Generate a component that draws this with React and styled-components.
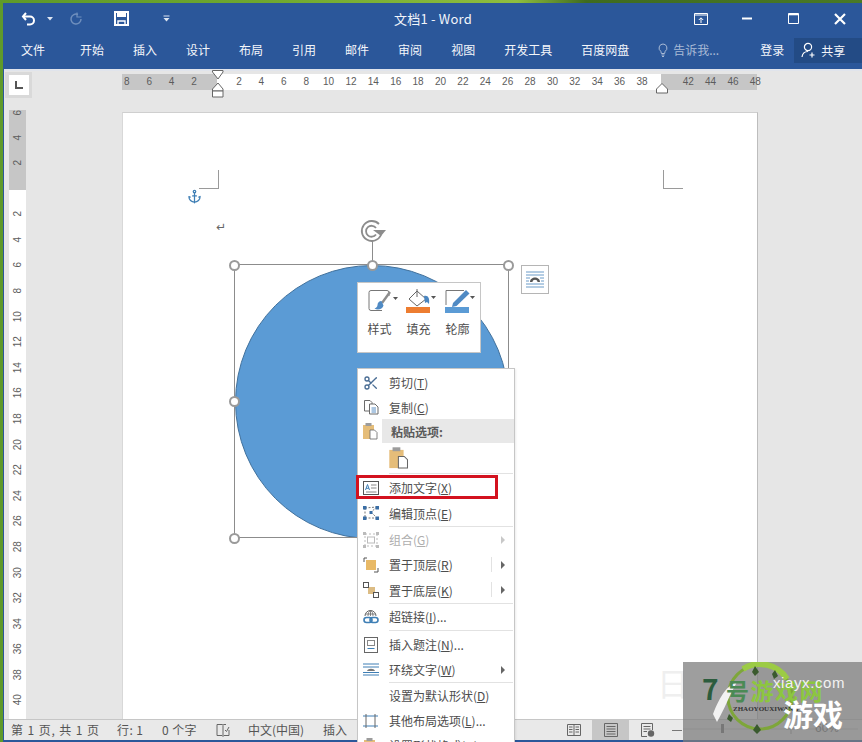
import React from 'react';
import styled, { createGlobalStyle } from 'styled-components';
import { Scissors, Anchor } from 'lucide-react';

const Global = createGlobalStyle`
  html, body { margin: 0; padding: 0; }
  body { font-family: "Noto Sans CJK SC", "Liberation Sans", sans-serif; }
  * { box-sizing: border-box; }
`;

const Stage = styled.div`
  position: relative; width: 862px; height: 742px; overflow: hidden; padding: 3px 0 0 3px;
  background: linear-gradient(90deg, #5f9a2a 0%, #6fa82e 30%, #8fbe3e 60%, #3f6b1f 68%, #4a7a26 100%);
`;
const Window = styled.div`
  width: 859px; height: 739px; display: flex; flex-direction: column;
  border-left: 1px solid #2b579a; border-bottom: 2px solid #2b579a; background: #e6e6e6;
`;
const Ribbon = styled.header`background: #2b579a; color: #fff; height: 66px; flex: none;`;
const TitleRow = styled.div`height: 31px; display: grid; grid-template-columns: 1fr auto 1fr; align-items: center;`;
const Qat = styled.div`display: flex; align-items: center; padding-left: 17px;`;
const QatSlot = styled.span`display: flex; align-items: center; justify-content: center; width: ${p => p.$w}px; height: 20px; margin-left: ${p => p.$ml || 0}px;`;
const Title = styled.div`font-size: 13px; letter-spacing: .2px; color: #f2f5fa; margin-top: -1px; font-family: "Noto Sans CJK SC", sans-serif;`;
const WinBtns = styled.div`display: flex; justify-content: flex-end; margin-right: -1px;`;
const WinBtn = styled.span`display: flex; width: 46.4px; justify-content: center; align-items: center; height: 24px;`;
const TabRow = styled.nav`height: 35px; display: flex; align-items: center; padding-left: 17px; font-size: 12px; position: relative;`;
const Tab = styled.span`flex: none; margin-right: ${p => p.$gap ?? 29}px; color: #f4f6fa; white-space: nowrap; line-height: 18px; margin-top: -4px;`;
const TellMe = styled.span`flex: none; display: flex; align-items: center; gap: 5px; color: #a9bbd6; width: 102px; margin-top: -4px;`;
const Share = styled.span`
  flex: none; margin-left: 10px; width: 68px; height: 25px; margin-top: -3px; background: #234b85; display: flex; align-items: center;
  gap: 4px; padding-left: 7px; color: #f4f6fa;
`;

const RulerRow = styled.div`height: 29px; flex: none; display: flex; align-items: flex-start; padding-top: 1px; background: #e6e6e6; border-top: 2px solid #e0e4ec;`;
const Corner = styled.div`
  width: 27px; height: 26px; margin-left: 1px; background: #d9d9d9; display: flex; align-items: center; justify-content: center;
`;
const CornerInner = styled.div`width: 20px; height: 20px; background: #fff; display: flex; align-items: center; justify-content: center;`;
const HRuler = styled.div`
  position: relative; margin-left: 90px; margin-top: 2px; height: 16px; width: 635px; display: flex;
  font: 10px/16px "Liberation Sans", sans-serif; color: #5c5c5c;
`;
const HSeg = styled.div`
  width: ${p => p.$w}px; flex: none; display: flex; background: ${p => p.$grey ? '#c6c6c6' : '#fff'};
  justify-content: ${p => p.$end ? 'flex-end' : 'flex-start'};
  padding: 0 ${p => p.$pr || 0}px 0 ${p => p.$pl || 0}px;
`;
const HTick = styled.span`width: 22.4px; flex: none; text-align: center;`;
const MarkerLeft = styled.svg`position: absolute; left: 90px; top: -4px;`;
const MarkerRight = styled.svg`position: absolute; left: 534px; top: 9px;`;

const Main = styled.div`flex: 1; display: flex; min-height: 0; padding-left: 5px;`;
const VRuler = styled.div`
  width: 17px; flex: none; margin-top: 12px; display: flex; flex-direction: column; overflow: hidden;
  font: 10px/17px "Liberation Sans", sans-serif; color: #5c5c5c;
`;
const VSeg = styled.div`
  display: flex; flex-direction: column; background: ${p => p.$grey ? '#c6c6c6' : '#fff'};
  height: ${p => p.$h ? p.$h + 'px' : 'auto'}; flex: ${p => p.$h ? 'none' : 1};
  justify-content: ${p => p.$end ? 'flex-end' : 'flex-start'};
  padding: ${p => p.$pt || 0}px 0 ${p => p.$pb || 0}px;
`;
const VTick = styled.span`height: ${p => p.$h}px; flex: none; display: flex; align-items: center; justify-content: center; transform: rotate(-90deg);`;
const Page = styled.div`
  position: relative; width: 636px; margin: 14px 0 0 96px; background: #fff;
  border-top: 1px solid #cfcfcf; border-right: 1px solid #bdbdbd; border-left: 1px solid #d8d8d8;
`;
const Crop = styled.div`
  position: absolute; left: ${p => p.$x}px; top: 57px; width: 20px; height: 19px; border-bottom: 1px solid #9a9a9a;
  ${p => p.$side}: 1px solid #9a9a9a;
`;
const AnchorMark = styled.span`position: absolute; left: 64px; top: 76px; color: #3f7fb5; display: flex;`;
const ReturnMark = styled.span`position: absolute; left: 93px; top: 107px; font: 12px/14px "DejaVu Sans", sans-serif; color: #666;`;
const Circle = styled.div`
  position: absolute; left: 112px; top: 152px; width: 274px; height: 274px; border-radius: 50%; background: #5b9bd5; border: 1px solid #41719c;
`;
const SelBox = styled.div`position: absolute; left: 111px; top: 151px; width: 275px; height: 274px; border: 1px solid #8c8c8c;`;
const Handle = styled.span`
  position: absolute; width: 11px; height: 11px; border-radius: 50%; background: #fff; border: 2px solid #9a9a9a;
  left: ${p => p.$x - 6.5}px; top: ${p => p.$y - 5.5}px;
`;
const RotateStem = styled.span`position: absolute; left: 249px; top: 128px; width: 1px; height: 23px; background: #8c8c8c;`;
const RotateIcon = styled.svg`position: absolute; left: 237px; top: 106px;`;
const LayoutBtn = styled.span`
  position: absolute; left: 398px; top: 152px; width: 28px; height: 29px; border: 1px solid #b5b5b5; background: #fff;
  display: flex; align-items: center; justify-content: center;
`;
const Ghost = styled.span`position: absolute; left: 534px; top: 546px; font-size: 32px; color: #efefef;`;

const MiniBar = styled.div`
  position: absolute; left: 234px; top: 169px; width: 124px; height: 71px; background: #fff; border: 1px solid #c6c6c6;
  display: flex; padding: 5px 0 0 2px; z-index: 4;
`;
const MiniBtn = styled.div`
  width: 39px; display: flex; flex-direction: column; align-items: center; font-size: 12px; color: #4d4d4d; gap: 6px; line-height: 18px;
`;
const MiniGlyph = styled.span`display: flex; height: 26px; width: 39px; padding-left: ${p => p.$pl}px; flex: none;`;

const Menu = styled.div`
  position: absolute; left: 234px; top: 255px; width: 158px; background: #fff; border: 1px solid #c6c6c6; padding-top: 1px;
  font-size: 12px; color: #4d4d4d; z-index: 5; box-shadow: 1px 1px 2px rgba(0,0,0,.08);
`;
const Item = styled.div`
  height: ${p => p.$h || 25}px; display: flex; align-items: center; position: relative; white-space: nowrap;
  color: ${p => p.$off ? '#aeaeae' : '#4d4d4d'};
`;
const ItemIcon = styled.span`width: ${p => p.$w || 31}px; flex: none; display: flex; align-items: center; justify-content: center; padding-right: ${p => p.$pr ?? 6}px;`;
const Sep = styled.div`height: 1px; margin: ${p => p.$m || 0}px 1px ${p => p.$m || 0}px 31px; background: #e2e2e2;`;
const Arrow = styled.span`
  position: absolute; right: 9px; top: 50%; margin-top: -4px; width: 0; height: 0;
  border-left: 4px solid ${p => p.$off ? '#c8c8c8' : '#666'}; border-top: 4px solid transparent; border-bottom: 4px solid transparent;
`;
const SubDivider = styled.span`position: absolute; right: 22px; top: 5px; height: 15px; width: 1px; background: #e2e2e2;`;
const PasteHead = styled.div`
  height: 24px; padding-left: 9px; background: #e8e8e8; display: flex; align-items: center; font-weight: 700; color: #5a5a5a; flex: 1;
`;
const PasteRow = styled.div`height: 29px; padding-left: 30px; display: flex; align-items: center;`;
const Highlight = styled.div`
  position: absolute; left: 233px; top: 362px; width: 142px; height: 24px; border: 3px solid #d3121f; z-index: 6; pointer-events: none;
`;

const Status = styled.footer`
  height: 21px; flex: none; background: #e9e9e9; border-top: 1px solid #c6c6c6; display: flex; align-items: center;
  font-size: 12px; color: #555; padding-left: 7px; position: relative; line-height: 20px;
`;
const StatusText = styled.span`
  width: ${p => p.$w}px; flex: none; white-space: nowrap; display: flex; align-items: center; letter-spacing: ${p => p.$ls || 0}px;
`;
const Views = styled.div`margin-left: auto; display: flex; align-items: center; height: 100%; margin-right: 179px;`;
const View = styled.span`
  width: 37px; height: 100%; display: flex; align-items: center; justify-content: center;
  background: ${p => p.$on ? '#c6c6c6' : 'transparent'};
`;
const ZoomOut = styled.span`width: 17px; height: 100%; display: flex; align-items: center; justify-content: flex-end; padding-right: 1px;`;
const ZoomDash = styled.span`width: 10px; height: 1px; background: #777;`;

const Mark = styled.div`
  position: absolute; left: 683px; top: 662px; width: 179px; height: 80px; background: rgba(125,125,125,.75); z-index: 8; overflow: hidden;
`;
const MarkArt = styled.svg`position: absolute; left: 0; top: 0;`;
const MarkTitle = styled.div`
  position: absolute; left: 19px; top: 12px; font: 700 23px/28px "Noto Sans CJK SC", sans-serif; color: #8cc63f; white-space: nowrap; letter-spacing: 1.5px;
`;
const MarkDark = styled.span`color: ${p => p.$c || '#1f4f32'}; ${p => p.$big ? 'font-size: 28px; margin-right: 6px;' : ''}`;
const MarkUrl = styled.div`position: absolute; left: 90px; top: 12px; font: 15px/18px "Liberation Sans", sans-serif; color: #f2f2f2; letter-spacing: .6px;`;
const MarkPin = styled.div`position: absolute; left: 50px; top: 42px; font: 700 7px/10px "Liberation Serif", serif; color: #333; white-space: nowrap;`;
const MarkBig = styled.div`position: absolute; left: 100px; top: 32px; font: 700 30px/38px "Noto Sans CJK SC", sans-serif; color: #fff; white-space: nowrap;`;
const MarkPct = styled.div`position: absolute; left: 132px; top: 58px; font: 12px/16px "Liberation Sans", sans-serif; color: #777;`;

const Ic = ({ w = 16, h = 16, children, ...r }) => (
  <svg width={w} height={h} viewBox={`0 0 ${w} ${h}`} fill="none" {...r}>{children}</svg>
);

const Undo = () => <Ic w={16} h={16}><path d="M5 2 L2 5.5 L5 9" stroke="#fff" strokeWidth="2"/><path d="M2.5 5.5H9a4 4 0 0 1 0 8H6" stroke="#fff" strokeWidth="2"/></Ic>;
const Caret = () => <Ic w={6} h={4}><path d="M0 0H6L3 3.5Z" fill="#dfe6f2"/></Ic>;
const Redo = () => <Ic w={14} h={14}><path d="M9 2.5A5 5 0 1 0 12 7" stroke="#6f8fbd" strokeWidth="1.5"/><path d="M8 0.5V5H12.5" stroke="#6f8fbd" strokeWidth="1.2"/></Ic>;
const Save = () => <Ic w={15} h={15}><path d="M1 1H14V14H1Z" stroke="#fff" strokeWidth="2"/><path d="M3 2H12V6H3Z" fill="#fff"/><path d="M4 10H11V14H4Z" stroke="#fff" strokeWidth="1.4"/></Ic>;
const Custom = () => <Ic w={7} h={7}><path d="M0.5 1H6.5" stroke="#dfe6f2"/><path d="M0.5 3H6.5L3.5 6.5Z" fill="#dfe6f2"/></Ic>;
const RibbonDisp = () => <Ic w={14} h={12}><path d="M.5 .5H13.5V11.5H.5Z" stroke="#fff"/><path d="M.5 2H13.5" stroke="#fff"/><path d="M7 10V5M4.8 7L7 4.8 9.2 7" stroke="#fff"/></Ic>;
const Minim = () => <Ic w={10} h={3}><path d="M0 1.5H10" stroke="#fff" strokeWidth="2"/></Ic>;
const Maxim = () => <Ic w={11} h={11}><path d="M.5 .5H10.5V10.5H.5Z" stroke="#fff"/><path d="M.5 1.5H10.5" stroke="#fff" strokeWidth="1.6"/></Ic>;
const Close = () => <Ic w={12} h={12}><path d="M1 1L11 11M11 1L1 11" stroke="#fff" strokeWidth="2.2"/></Ic>;
const Bulb = () => <Ic w={10} h={14}><path d="M5 1a4 4 0 0 0-2.2 7.3L3.4 10.5H6.6L7.2 8.3A4 4 0 0 0 5 1Z" stroke="#a9bbd6"/><path d="M3.5 12H6.5M4 13.5H6" stroke="#a9bbd6"/></Ic>;
const Person = () => <Ic w={16} h={16}><circle cx="7" cy="5" r="3.6" stroke="#fff" strokeWidth="1.2"/><path d="M1 15C1.5 11 4 9.5 7 9.5M11 10.5V15.5M8.5 13H13.5" stroke="#fff" strokeWidth="1.2"/></Ic>;

const StyleIcon = () => (
  <Ic w={30} h={26}><path d="M14 22.5H3a2 2 0 0 1-2-2V4.5a2 2 0 0 1 2-2H19a2 2 0 0 1 2 2V8" stroke="#777"/><path d="M22 4L14 15" stroke="#8d8d8d" strokeWidth="2.4"/><path d="M13.5 13c-2.5 0-4 2-4 4 0 2-1.5 3-3 3.5 3 2 8 1 9-3z" fill="#4f8ac4"/><path d="M25 9H30L27.5 12Z" fill="#555"/></Ic>
);
const FillIcon = () => (
  <Ic w={30} h={25}><path d="M11 3L20 11L11 18L3 11Z" stroke="#666" fill="#fff"/><path d="M11 1V9" stroke="#666"/><path d="M18 8c4-1 6 2 5 8l-2-2-2 1z" fill="#4a86c0"/><rect x="0" y="19" width="24" height="6" fill="#ed7d31"/><path d="M25 8H30L27.5 11Z" fill="#555"/></Ic>
);
const OutlineIcon = () => (
  <Ic w={30} h={25}><path d="M1 17V2.5H19" stroke="#777"/><path d="M8 15L21 2L24.5 5.5L11.5 18L7 19Z" fill="#4f8ac4"/><rect x="0" y="19" width="24" height="6" fill="#5b9bd5"/><path d="M25 8H30L27.5 11Z" fill="#555"/></Ic>
);
const CopyI = () => <Ic w={16} h={16}><path d="M1.5 1.5H7L9 3.5V12H1.5Z" stroke="#6b6b6b" fill="#fff"/><path d="M6.5 5H12L15 8V15H6.5Z" stroke="#6b6b6b" fill="#fff"/><path d="M8.5 9H13M8.5 11H13M8.5 13H13" stroke="#5b8fc4"/></Ic>;
const PasteI = ({ s = 1 }) => (
  <svg width={16 * s} height={18 * s} viewBox="0 0 16 18" fill="none">
    <rect x="1" y="3" width="11" height="14" fill="#e5bd79"/><rect x="3.5" y="1" width="6" height="3" fill="#9c9c9c"/><path d="M8 8H12.5L15 10.5V17H8Z" fill="#fff" stroke="#666" strokeWidth=".8"/>
  </svg>
);
const TextBoxI = () => <Ic w={16} h={14}><rect x=".5" y=".5" width="15" height="13" stroke="#555" fill="#fff"/><path d="M2.5 9L4.5 3.5 6.5 9M3.2 7.3H5.8" stroke="#3f7fb5"/><path d="M8 4H13.5M8 7H13.5M3 11H13.5" stroke="#888"/></Ic>;
const PointsI = () => <Ic w={16} h={14}><path d="M2 2L14 1M14 1L8 6M8 6L14 12M2 12H14M2 2V12" stroke="#777" strokeDasharray="2 1.5"/><rect x="0" y="0" width="3.5" height="3.5" fill="#3a6ea5"/><rect x="12.5" y="0" width="3.5" height="3.5" fill="#3a6ea5"/><rect x="0" y="10.5" width="3.5" height="3.5" fill="#3a6ea5"/><rect x="12.5" y="10.5" width="3.5" height="3.5" fill="#3a6ea5"/><rect x="6.5" y="5" width="3" height="3" fill="#3a6ea5"/></Ic>;
const GroupI = () => <Ic w={16} h={16}><path d="M2 2H14V14H2Z" stroke="#bbb" strokeDasharray="2 2"/><rect x="0" y="0" width="3" height="3" fill="#bbb"/><rect x="13" y="0" width="3" height="3" fill="#bbb"/><rect x="0" y="13" width="3" height="3" fill="#bbb"/><rect x="13" y="13" width="3" height="3" fill="#bbb"/><rect x="4.5" y="5" width="7" height="6" stroke="#bbb"/></Ic>;
const FrontI = () => <Ic w={16} h={16}><path d="M4 1H1V5M15 11V15H11" stroke="#555"/><rect x="3" y="3" width="10" height="10" fill="#e8b966"/></Ic>;
const BackI = () => <Ic w={16} h={16}><rect x="5" y="5" width="7" height="7" fill="#dcbc84"/><rect x=".5" y=".5" width="5" height="5" stroke="#555" fill="#fff"/><rect x="10.5" y="10.5" width="5" height="5" stroke="#555" fill="#fff"/></Ic>;
const LinkI = () => <Ic w={16} h={16}><path d="M2 7a5.5 5.5 0 0 1 11 0" stroke="#666"/><path d="M7.5 1.5V7M5 7C5 4 6 2 7.5 1.5 9 2 10 4 10 7M2.5 5H12.5" stroke="#666" strokeWidth=".8"/><rect x="1" y="8.5" width="8" height="5" rx="2.5" stroke="#3f7fb5" strokeWidth="1.6"/><rect x="7" y="8.5" width="8" height="5" rx="2.5" stroke="#3f7fb5" strokeWidth="1.6"/></Ic>;
const CaptionI = () => <Ic w={14} h={16}><rect x=".5" y=".5" width="13" height="15" stroke="#666" fill="#fff"/><rect x="3.5" y="3.5" width="7" height="5" stroke="#888"/><path d="M3.5 11.5H10.5" stroke="#3f7fb5"/></Ic>;
const WrapI = () => <Ic w={16} h={13}><path d="M0 1H16M0 4H16M0 9.5H16M0 12H16" stroke="#3f7fb5"/><path d="M4 8C5 5 11 5 12 8Z" fill="#777"/></Ic>;
const MoreI = () => <Ic w={15} h={14}><path d="M0 2H15M0 12H15" stroke="#3f7fb5"/><path d="M3 0V14M12 0V14" stroke="#666"/></Ic>;
const LayoutI = () => <Ic w={20} h={20}><path d="M1 2H19M1 5H19M1 14H19M1 17H19M1 8H5M15 8H19M1 11H4M16 11H19" stroke="#6a9bc8"/><path d="M5 12C5 6 15 6 15 12H12.5C12.5 9 7.5 9 7.5 12Z" fill="#555"/></Ic>;
const BookI = () => <Ic w={14} h={14}><path d="M1 1.5H6.5L7 2.5 7.5 1.5H10M1 1.5V12.5H6L7 13.5 8 12.5H13V7" stroke="#666"/><path d="M9 7L10.5 8.5 13 4" stroke="#666"/><path d="M7 3V13" stroke="#666"/></Ic>;
const ReadI = () => <Ic w={14} h={14}><path d="M.5 1.5H13.5V12.5H.5ZM7 1.5V12.5" stroke="#666"/><path d="M2 4H5.5M2 6.5H5.5M2 9H5.5M8.5 4H12M8.5 6.5H12M8.5 9H12" stroke="#666"/></Ic>;
const PrintI = () => <Ic w={14} h={14}><path d="M.5 .5H13.5V13.5H.5Z" stroke="#666"/><path d="M2.5 3.5H11.5M2.5 6H11.5M2.5 8.5H11.5M2.5 11H11.5" stroke="#666"/></Ic>;
const WebI = () => <Ic w={14} h={14}><path d="M.5 .5H11.5V7M.5 .5V13.5H6" stroke="#666"/><path d="M2.5 3.5H9.5M2.5 6H9.5M2.5 8.5H6" stroke="#666"/><circle cx="10" cy="10.5" r="3.2" fill="#666"/></Ic>;

const leftNums = [8, 6, 4, 2];
const midNums = Array.from({ length: 19 }, (_, i) => (i + 1) * 2);
const rightNums = [42, 44, 46, 48];
const vUp = [6, 4, 2];
const vDown = Array.from({ length: 20 }, (_, i) => (i + 1) * 2);
const handles = [[112, 152], [250, 152], [386, 152], [112, 288], [386, 288], [112, 425], [250, 425], [386, 425]];
const tabs = ['文件', '开始', '插入', '设计', '布局', '引用', '邮件', '审阅', '视图', '开发工具', '百度网盘'];

export default function App() {
  return (
    <Stage>
      <Global />
      <Window>
        <Ribbon>
          <TitleRow>
            <Qat>
              <QatSlot $w={16}><Undo /></QatSlot>
              <QatSlot $w={6} $ml={10}><Caret /></QatSlot>
              <QatSlot $w={14} $ml={16}><Redo /></QatSlot>
              <QatSlot $w={15} $ml={31}><Save /></QatSlot>
              <QatSlot $w={7} $ml={34}><Custom /></QatSlot>
            </Qat>
            <Title>文档1 - Word</Title>
            <WinBtns>
              <WinBtn><RibbonDisp /></WinBtn>
              <WinBtn><Minim /></WinBtn>
              <WinBtn><Maxim /></WinBtn>
              <WinBtn><Close /></WinBtn>
            </WinBtns>
          </TitleRow>
          <TabRow>
            {tabs.map((t, i) => <Tab key={t} $gap={i === 0 ? 35 : 29}>{t}</Tab>)}
            <TellMe><Bulb />告诉我...</TellMe>
            <Tab $gap={0}>登录</Tab>
            <Share><Person />共享</Share>
          </TabRow>
        </Ribbon>
        <RulerRow>
          <Corner>
            <CornerInner>
              <Ic w={10} h={10}><path d="M2 1V8H9" stroke="#555" strokeWidth="2" /></Ic>
            </CornerInner>
          </Corner>
          <HRuler>
            <HSeg $w={95} $grey $end $pr={11.8}>{leftNums.map(n => <HTick key={n}>{n}</HTick>)}</HSeg>
            <HSeg $w={444} $pl={10.8}>{midNums.map(n => <HTick key={n}>{n}</HTick>)}</HSeg>
            <HSeg $w={96} $grey $pl={16}>{rightNums.map(n => <HTick key={n}>{n}</HTick>)}</HSeg>
            <MarkerLeft width="12" height="28" viewBox="0 0 12 28" fill="none">
              <path d="M.5 .5H11V2L6 9 .5 2Z" fill="#fff" stroke="#666" />
              <path d="M6 13L11 19V21H.5V19Z" fill="#fff" stroke="#666" />
              <path d="M.5 21H11V27H.5Z" fill="#fff" stroke="#666" />
            </MarkerLeft>
            <MarkerRight width="12" height="11" viewBox="0 0 12 11" fill="none">
              <path d="M6 .5L11.5 6V10H.5V6Z" fill="#fff" stroke="#666" />
            </MarkerRight>
          </HRuler>
        </RulerRow>
        <Main>
          <VRuler>
            <VSeg $grey $h={80} $end $pb={14.3}>{vUp.map(n => <VTick $h={25.4} key={n}>{n}</VTick>)}</VSeg>
            <VSeg $pt={11.2}>{vDown.map(n => <VTick $h={25.6} key={n}>{n}</VTick>)}</VSeg>
          </VRuler>
          <Page>
            <Crop $x={76} $side="border-right" />
            <Crop $x={540} $side="border-left" />
            <AnchorMark><Anchor size={15} strokeWidth={2} /></AnchorMark>
            <ReturnMark>↵</ReturnMark>
            <Circle />
            <SelBox />
            <RotateStem />
            <RotateIcon width="26" height="24" viewBox="0 0 26 24" fill="none">
              <path d="M19 5A10 10 0 1 0 21 16" stroke="#8c8c8c" strokeWidth="1.8" />
              <path d="M16 9A5.5 5.5 0 1 0 16 15.5" stroke="#8c8c8c" strokeWidth="1.8" />
              <path d="M13 11H26L21 17Z" fill="#8c8c8c" />
            </RotateIcon>
            {handles.map(([x, y]) => <Handle key={`${x}-${y}`} $x={x} $y={y} />)}
            <LayoutBtn><LayoutI /></LayoutBtn>
            <Ghost>日</Ghost>

            <MiniBar>
              <MiniBtn><MiniGlyph $pl={8}><StyleIcon /></MiniGlyph>样式</MiniBtn>
              <MiniBtn><MiniGlyph $pl={7}><FillIcon /></MiniGlyph>填充</MiniBtn>
              <MiniBtn><MiniGlyph $pl={7}><OutlineIcon /></MiniGlyph>轮廓</MiniBtn>
            </MiniBar>

            <Menu>
              <Item><ItemIcon><Scissors size={16} color="#4a6d94" /></ItemIcon>剪切(<u>T</u>)</Item>
              <Item $h={24}><ItemIcon><CopyI /></ItemIcon>复制(<u>C</u>)</Item>
              <Item $h={24}><ItemIcon $w={24} $pr={0}><PasteI /></ItemIcon><PasteHead>粘贴选项:</PasteHead></Item>
              <PasteRow><PasteI s={1.3} /></PasteRow>
              <Sep $m={1} />
              <Item><ItemIcon><TextBoxI /></ItemIcon>添加文字(<u>X</u>)</Item>
              <Item $h={26}><ItemIcon><PointsI /></ItemIcon>编辑顶点(<u>E</u>)</Item>
              <Sep />
              <Item $off><ItemIcon><GroupI /></ItemIcon>组合(<u>G</u>)<Arrow $off /></Item>
              <Item><ItemIcon><FrontI /></ItemIcon>置于顶层(<u>R</u>)<SubDivider /><Arrow /></Item>
              <Item $h={26}><ItemIcon><BackI /></ItemIcon>置于底层(<u>K</u>)<SubDivider /><Arrow /></Item>
              <Sep />
              <Item><ItemIcon><LinkI /></ItemIcon>超链接(<u>I</u>)...</Item>
              <Sep $m={1} />
              <Item><ItemIcon><CaptionI /></ItemIcon>插入题注(<u>N</u>)...</Item>
              <Item><ItemIcon><WrapI /></ItemIcon>环绕文字(<u>W</u>)<Arrow /></Item>
              <Sep />
              <Item><ItemIcon />设置为默认形状(<u>D</u>)</Item>
              <Item><ItemIcon><MoreI /></ItemIcon>其他布局选项(<u>L</u>)...</Item>
              <Item><ItemIcon><PasteI /></ItemIcon>设置形状格式(<u>O</u>)...</Item>
            </Menu>
            <Highlight />
          </Page>
        </Main>
        <Status>
          <StatusText $w={106} $ls={0.9}>第 1 页, 共 1 页</StatusText>
          <StatusText $w={45} $ls={0.4}>行: 1</StatusText>
          <StatusText $w={54} $ls={0.4}>0 个字</StatusText>
          <StatusText $w={32}><BookI /></StatusText>
          <StatusText $w={75}>中文(中国)</StatusText>
          <StatusText $w={30}>插入</StatusText>
          <Views>
            <View><ReadI /></View>
            <View $on><PrintI /></View>
            <View><WebI /></View>
            <ZoomOut><ZoomDash /></ZoomOut>
          </Views>
        </Status>
      </Window>
      <Mark>
        <MarkArt width="179" height="80" viewBox="0 0 179 80" fill="none">
          <path d="M0 67H175" stroke="#8f8f8f" />
          <rect x="38" y="62" width="3" height="9" fill="#777" />
          <path d="M103 67H113M108 62V72" stroke="#8a8a8a" strokeWidth="1.5" />
          <circle cx="77" cy="35" r="32" stroke="#7ea63a" strokeWidth="3" />
          <path d="M60 7A32 32 0 0 1 104 17" stroke="#9ccb45" strokeWidth="6" />
          <path d="M30 52C38 32 44 24 54 20C46 34 42 46 34 60Z" fill="#f2f2f2" />
          <path d="M72 4l4 6-4 4-3-4zM92 8l3 6-4 3-2-5zM74 62l4 6-4 4-4-4zM46 52l4 4-2 4-4-3z" fill="#3a5a2e" />
        </MarkArt>
        <MarkTitle><MarkDark $big $c="#2c5c3d">7</MarkDark><MarkDark $c="#4b8a55">号</MarkDark>游戏网</MarkTitle>
        <MarkUrl>xiayx.com</MarkUrl>
        <MarkPin>ZHAOYOUXIWANG</MarkPin>
        <MarkPct>60%</MarkPct>
        <MarkBig>游戏</MarkBig>
      </Mark>
    </Stage>
  );
}
